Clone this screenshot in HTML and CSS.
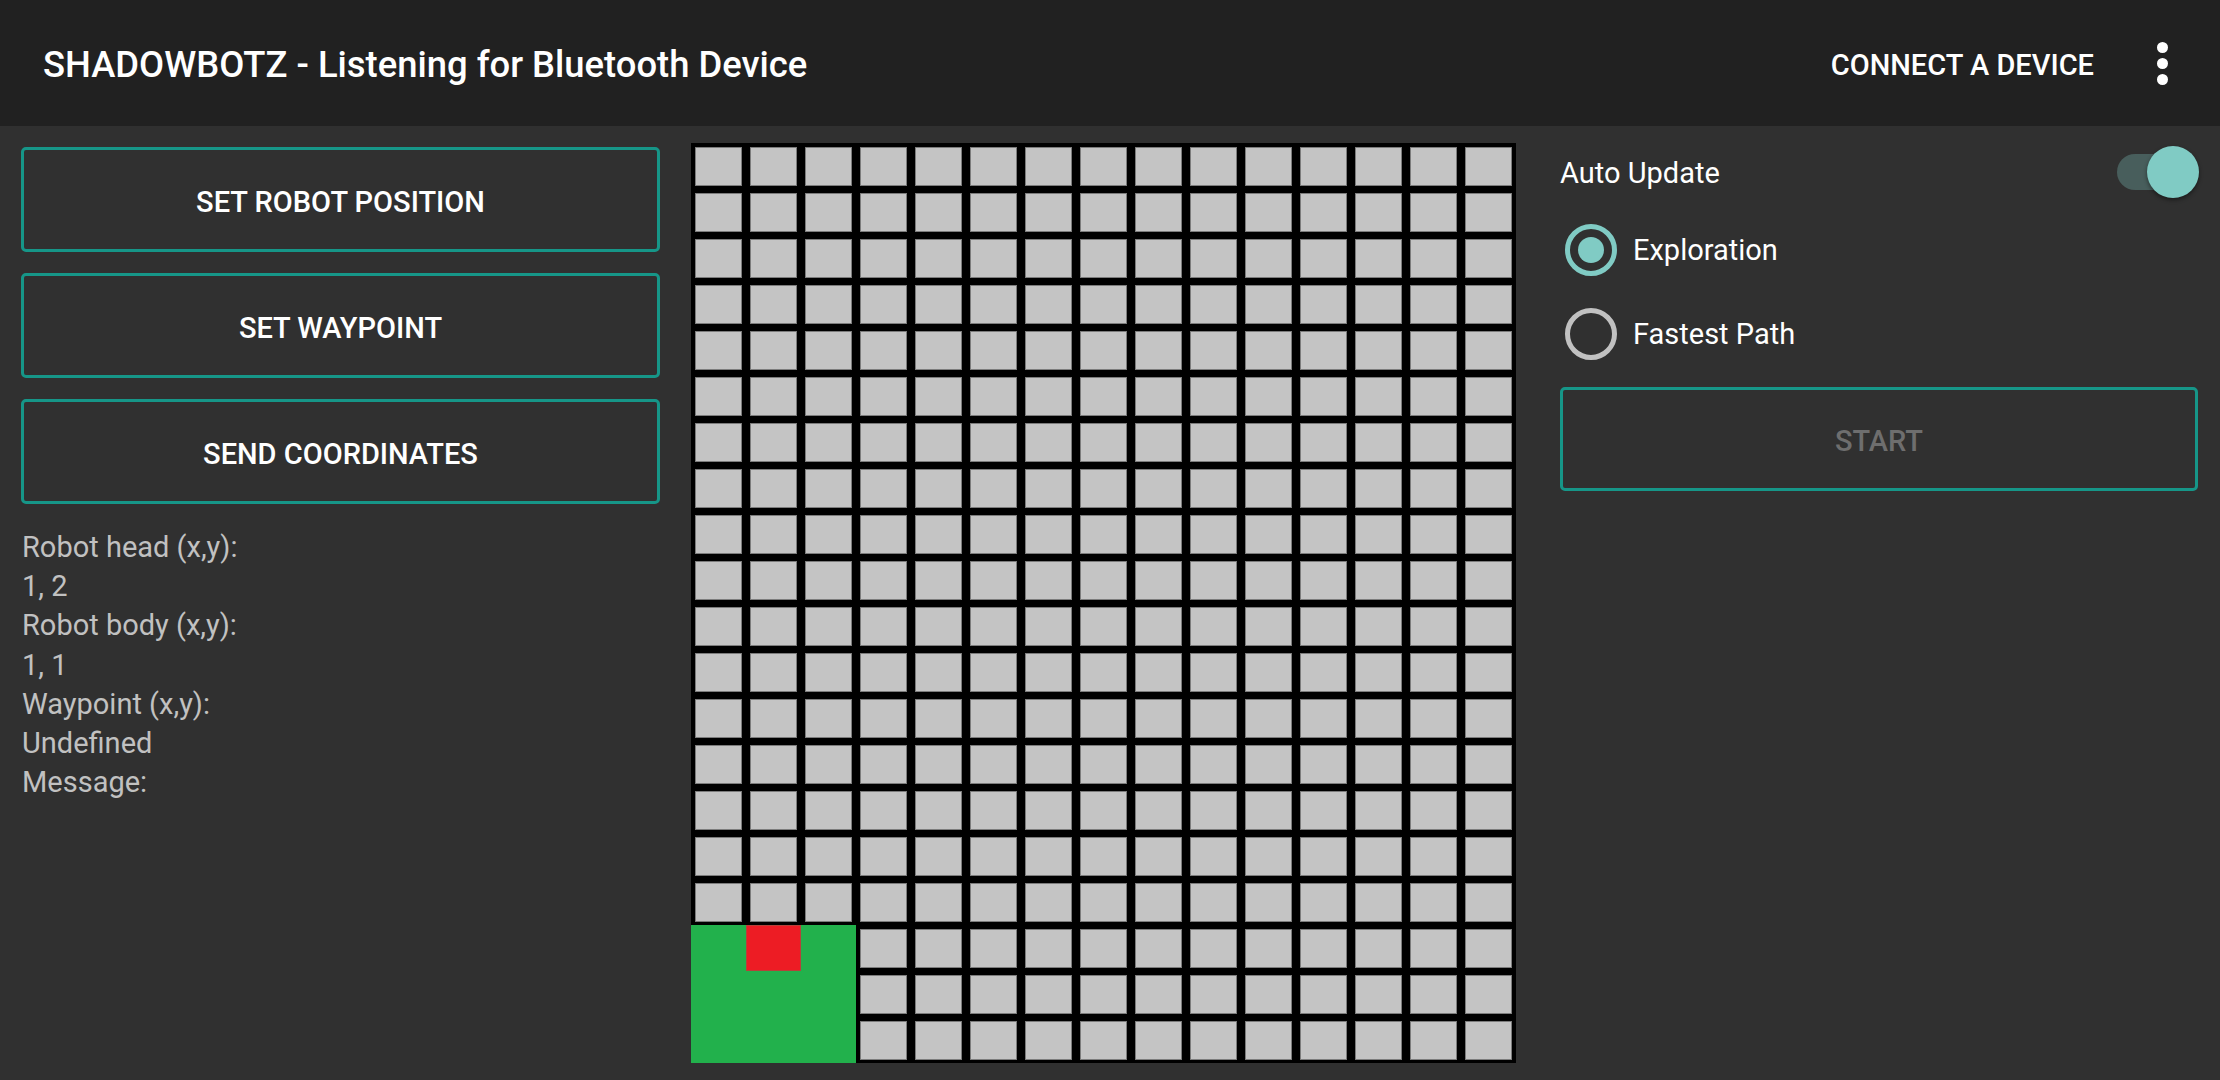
FILE: index.html
```html
<!DOCTYPE html>
<html>
<head>
<meta charset="utf-8">
<title>SHADOWBOTZ</title>
<link rel="stylesheet" href="styles.css">
</head>
<body>
<header class="appbar">
  <div class="title">SHADOWBOTZ - Listening for Bluetooth Device</div>
  <div class="actions">
    <span class="action-text">CONNECT A DEVICE</span>
    <span class="overflow"><i></i><i></i><i></i></span>
  </div>
</header>
<main class="main">
  <section class="left">
    <button class="outline-btn">SET ROBOT POSITION</button>
    <button class="outline-btn">SET WAYPOINT</button>
    <button class="outline-btn">SEND COORDINATES</button>
    <div class="info">
      <div>Robot head (x,y):</div>
      <div>1, 2</div>
      <div>Robot body (x,y):</div>
      <div>1, 1</div>
      <div>Waypoint (x,y):</div>
      <div>Undefined</div>
      <div>Message:</div>
    </div>
  </section>
  <section class="board">
    <div class="c"></div><div class="c"></div><div class="c"></div><div class="c"></div><div class="c"></div><div class="c"></div><div class="c"></div><div class="c"></div><div class="c"></div><div class="c"></div><div class="c"></div><div class="c"></div><div class="c"></div><div class="c"></div><div class="c"></div>
    <div class="c"></div><div class="c"></div><div class="c"></div><div class="c"></div><div class="c"></div><div class="c"></div><div class="c"></div><div class="c"></div><div class="c"></div><div class="c"></div><div class="c"></div><div class="c"></div><div class="c"></div><div class="c"></div><div class="c"></div>
    <div class="c"></div><div class="c"></div><div class="c"></div><div class="c"></div><div class="c"></div><div class="c"></div><div class="c"></div><div class="c"></div><div class="c"></div><div class="c"></div><div class="c"></div><div class="c"></div><div class="c"></div><div class="c"></div><div class="c"></div>
    <div class="c"></div><div class="c"></div><div class="c"></div><div class="c"></div><div class="c"></div><div class="c"></div><div class="c"></div><div class="c"></div><div class="c"></div><div class="c"></div><div class="c"></div><div class="c"></div><div class="c"></div><div class="c"></div><div class="c"></div>
    <div class="c"></div><div class="c"></div><div class="c"></div><div class="c"></div><div class="c"></div><div class="c"></div><div class="c"></div><div class="c"></div><div class="c"></div><div class="c"></div><div class="c"></div><div class="c"></div><div class="c"></div><div class="c"></div><div class="c"></div>
    <div class="c"></div><div class="c"></div><div class="c"></div><div class="c"></div><div class="c"></div><div class="c"></div><div class="c"></div><div class="c"></div><div class="c"></div><div class="c"></div><div class="c"></div><div class="c"></div><div class="c"></div><div class="c"></div><div class="c"></div>
    <div class="c"></div><div class="c"></div><div class="c"></div><div class="c"></div><div class="c"></div><div class="c"></div><div class="c"></div><div class="c"></div><div class="c"></div><div class="c"></div><div class="c"></div><div class="c"></div><div class="c"></div><div class="c"></div><div class="c"></div>
    <div class="c"></div><div class="c"></div><div class="c"></div><div class="c"></div><div class="c"></div><div class="c"></div><div class="c"></div><div class="c"></div><div class="c"></div><div class="c"></div><div class="c"></div><div class="c"></div><div class="c"></div><div class="c"></div><div class="c"></div>
    <div class="c"></div><div class="c"></div><div class="c"></div><div class="c"></div><div class="c"></div><div class="c"></div><div class="c"></div><div class="c"></div><div class="c"></div><div class="c"></div><div class="c"></div><div class="c"></div><div class="c"></div><div class="c"></div><div class="c"></div>
    <div class="c"></div><div class="c"></div><div class="c"></div><div class="c"></div><div class="c"></div><div class="c"></div><div class="c"></div><div class="c"></div><div class="c"></div><div class="c"></div><div class="c"></div><div class="c"></div><div class="c"></div><div class="c"></div><div class="c"></div>
    <div class="c"></div><div class="c"></div><div class="c"></div><div class="c"></div><div class="c"></div><div class="c"></div><div class="c"></div><div class="c"></div><div class="c"></div><div class="c"></div><div class="c"></div><div class="c"></div><div class="c"></div><div class="c"></div><div class="c"></div>
    <div class="c"></div><div class="c"></div><div class="c"></div><div class="c"></div><div class="c"></div><div class="c"></div><div class="c"></div><div class="c"></div><div class="c"></div><div class="c"></div><div class="c"></div><div class="c"></div><div class="c"></div><div class="c"></div><div class="c"></div>
    <div class="c"></div><div class="c"></div><div class="c"></div><div class="c"></div><div class="c"></div><div class="c"></div><div class="c"></div><div class="c"></div><div class="c"></div><div class="c"></div><div class="c"></div><div class="c"></div><div class="c"></div><div class="c"></div><div class="c"></div>
    <div class="c"></div><div class="c"></div><div class="c"></div><div class="c"></div><div class="c"></div><div class="c"></div><div class="c"></div><div class="c"></div><div class="c"></div><div class="c"></div><div class="c"></div><div class="c"></div><div class="c"></div><div class="c"></div><div class="c"></div>
    <div class="c"></div><div class="c"></div><div class="c"></div><div class="c"></div><div class="c"></div><div class="c"></div><div class="c"></div><div class="c"></div><div class="c"></div><div class="c"></div><div class="c"></div><div class="c"></div><div class="c"></div><div class="c"></div><div class="c"></div>
    <div class="c"></div><div class="c"></div><div class="c"></div><div class="c"></div><div class="c"></div><div class="c"></div><div class="c"></div><div class="c"></div><div class="c"></div><div class="c"></div><div class="c"></div><div class="c"></div><div class="c"></div><div class="c"></div><div class="c"></div>
    <div class="c"></div><div class="c"></div><div class="c"></div><div class="c"></div><div class="c"></div><div class="c"></div><div class="c"></div><div class="c"></div><div class="c"></div><div class="c"></div><div class="c"></div><div class="c"></div><div class="c"></div><div class="c"></div><div class="c"></div>
    <div class="c"></div><div class="c"></div><div class="c"></div><div class="c"></div><div class="c"></div><div class="c"></div><div class="c"></div><div class="c"></div><div class="c"></div><div class="c"></div><div class="c"></div><div class="c"></div><div class="c"></div><div class="c"></div><div class="c"></div>
    <div class="c"></div><div class="c"></div><div class="c"></div><div class="c"></div><div class="c"></div><div class="c"></div><div class="c"></div><div class="c"></div><div class="c"></div><div class="c"></div><div class="c"></div><div class="c"></div><div class="c"></div><div class="c"></div><div class="c"></div>
    <div class="c"></div><div class="c"></div><div class="c"></div><div class="c"></div><div class="c"></div><div class="c"></div><div class="c"></div><div class="c"></div><div class="c"></div><div class="c"></div><div class="c"></div><div class="c"></div><div class="c"></div><div class="c"></div><div class="c"></div>
    <div class="robot"><div class="robot-head"></div></div>
  </section>
  <section class="right">
    <div class="toggle-row">
      <span class="label">Auto Update</span>
      <span class="switch"><span class="track"></span><span class="thumb"></span></span>
    </div>
    <div class="radio-group">
      <div class="radio-row"><span class="radio checked"><span class="dot"></span></span><span class="label">Exploration</span></div>
      <div class="radio-row"><span class="radio"></span><span class="label">Fastest Path</span></div>
    </div>
    <button class="outline-btn start" disabled>START</button>
  </section>
</main>
</body>
</html>
```

FILE: styles.css
```css
* { box-sizing: border-box; }
html, body {
  margin: 0;
  padding: 0;
  background: #303030;
  font-family: Roboto, "Noto Sans", sans-serif;
  width: 2220px;
  height: 1080px;
  overflow: hidden;
}

.appbar {
  height: 126px;
  background: #212121;
  display: flex;
  align-items: center;
  justify-content: space-between;
  padding: 3px 52px 0 43px;
}
.title {
  color: #ffffff;
  font-size: 36.4px;
  font-weight: 500;
}
.actions {
  display: flex;
  align-items: center;
  gap: 63px;
}
.action-text {
  color: #ffffff;
  font-size: 29px;
  font-weight: 500;
}
.overflow {
  display: flex;
  flex-direction: column;
  gap: 5px;
  margin-top: -3px;
}
.overflow i {
  display: block;
  width: 11px;
  height: 11px;
  border-radius: 50%;
  background: #ffffff;
}

.main {
  display: flex;
  align-items: flex-start;
  padding: 0 22px 0 21px;
}

.left {
  width: 639px;
  margin-top: 21px;
  display: flex;
  flex-direction: column;
  gap: 21px;
}
.outline-btn {
  height: 105px;
  width: 100%;
  background: transparent;
  border: 3px solid #169688;
  border-radius: 5px;
  color: #ffffff;
  font-family: Roboto, "Noto Sans", sans-serif;
  font-size: 29px;
  font-weight: 500;
  padding: 4px 0 0 0;
}
.info {
  margin-top: 3px;
  color: #c1c1c1;
  font-size: 29px;
  line-height: 39.2px;
  padding-left: 1px;
}

.board {
  position: relative;
  margin-left: 31px;
  margin-top: 17px;
  width: 825px;
  height: 920px;
  background: #000000;
  padding: 4px 4px 3px 4px;
  display: grid;
  grid-template-columns: repeat(15, 47px);
  grid-auto-rows: 39px;
  column-gap: 8px;
  row-gap: 7px;
}
.c {
  background: #c4c4c4;
  border: 1px solid #7c7c7c;
}
.robot {
  position: absolute;
  left: 0;
  bottom: 0;
  width: 165px;
  height: 138px;
  background: #22b14c;
}
.robot-head {
  position: absolute;
  left: 55px;
  top: 0;
  width: 55px;
  height: 46px;
  background: #ed1c24;
  border: 1px solid #b5423a;
}

.right {
  width: 638px;
  margin-left: 44px;
  margin-top: 20px;
  display: flex;
  flex-direction: column;
}
.label {
  color: #ffffff;
  font-size: 29px;
}
.toggle-row {
  height: 52px;
  display: flex;
  align-items: center;
  justify-content: space-between;
  padding-top: 2px;
}
.switch {
  position: relative;
  width: 82px;
  height: 52px;
  margin-right: -1px;
  margin-top: -2px;
}
.track {
  position: absolute;
  left: 0;
  top: 8px;
  width: 72px;
  height: 36px;
  border-radius: 18px;
  background: #485e5c;
}
.thumb {
  position: absolute;
  right: 0;
  top: 0;
  width: 52px;
  height: 52px;
  border-radius: 50%;
  background: #80cbc4;
  box-shadow: 0 2px 4px rgba(0, 0, 0, 0.45);
}
.radio-group {
  margin-top: 26px;
  display: flex;
  flex-direction: column;
  gap: 32px;
}
.radio-row {
  height: 52px;
  display: flex;
  align-items: center;
  gap: 16px;
  padding-left: 5px;
}
.radio {
  width: 52px;
  height: 52px;
  border-radius: 50%;
  border: 5px solid #c1c1c1;
  display: flex;
  align-items: center;
  justify-content: center;
}
.radio.checked {
  border-color: #80cbc4;
}
.dot {
  width: 26px;
  height: 26px;
  border-radius: 50%;
  background: #80cbc4;
}
.start {
  margin-top: 27px;
  height: 104px;
  color: #6e6e6e;
}
```
